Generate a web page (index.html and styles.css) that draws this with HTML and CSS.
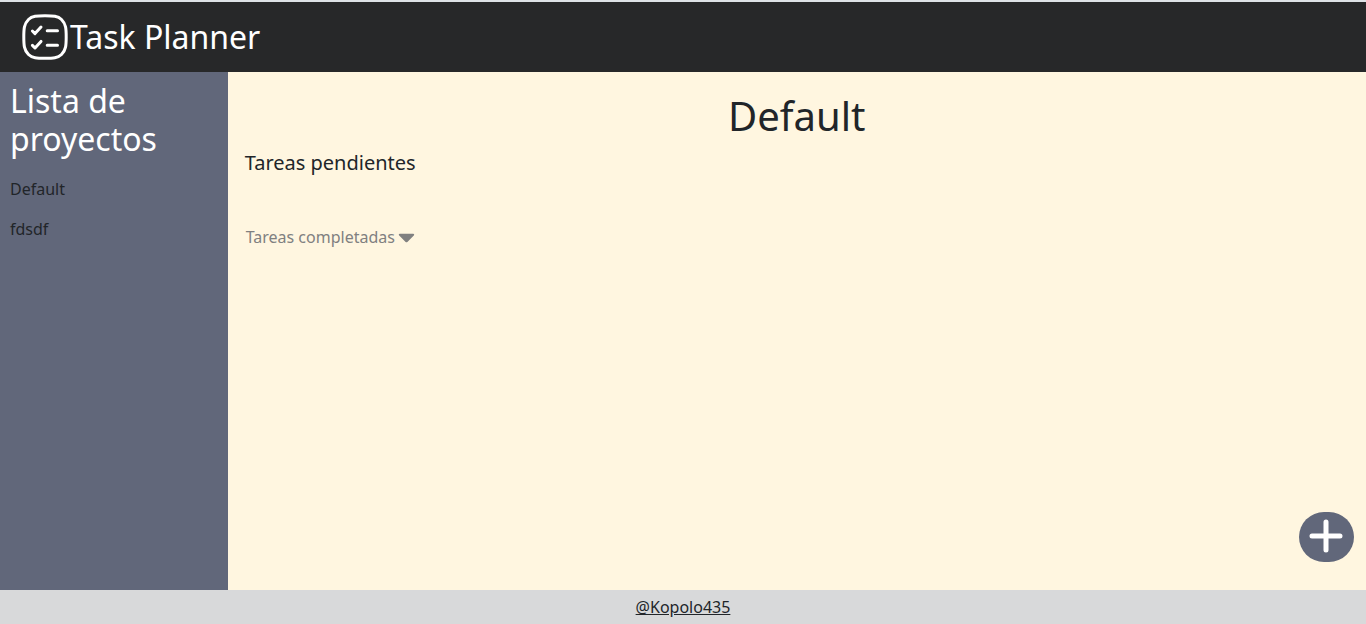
FILE: index.html
```html
<!DOCTYPE html>
<html lang="es">
<head>
<meta charset="utf-8">
<title>Task Planner</title>
<link rel="stylesheet" href="styles.css">
</head>
<body>
<header class="header">
  <svg class="logo" viewBox="0 0 50 50" aria-hidden="true">
    <path d="M25 3.800C33 3.800 38 4 41.500 7.500C46 12 46.200 17 46.200 25S46 38 41.500 42.500C38 46 33 46.200 25 46.200S12 46 8.500 42.500C4 38 3.800 33 3.800 25S4 12 8.500 7.500C12 4 17 3.800 25 3.800z"/>
    <path d="M12.400 19l2.600 2.600 6-6.600M12.400 33.400l2.600 2.600 6-6.600M27.200 18.800h10.300M27.200 33.300h10.300"/>
  </svg>
  <h1 class="brand">Task Planner</h1>
</header>
<div class="content">
  <aside class="sidebar">
    <h2 class="sidebar-title">Lista de proyectos</h2>
    <button class="project" type="button">Default</button>
    <button class="project" type="button">fdsdf</button>
  </aside>
  <main class="main">
    <h2 class="title">Default</h2>
    <h3 class="pending">Tareas pendientes</h3>
    <button class="completed" type="button">Tareas completadas
      <svg class="caret" viewBox="0 0 20 20" aria-hidden="true"><path d="M2.800 6.800h13.400c1 0 1.300 1 .6 1.700l-6.400 6.400c-.6.600-1.200.600-1.800 0L2.200 8.500C1.500 7.800 1.800 6.800 2.800 6.800z"/></svg>
    </button>
    <button class="add" type="button" aria-label="Agregar tarea">
      <svg class="plus" viewBox="0 0 34 34" aria-hidden="true"><path d="M17 3v28M3 17h28"/></svg>
    </button>
  </main>
</div>
<footer class="footer"><a class="author" href="#">@Kopolo435</a></footer>
</body>
</html>
```
FILE: styles.css
```css
* { box-sizing: border-box; }
body {
  margin: 0;
  min-height: 100vh;
  display: flex;
  flex-direction: column;
  font: 16px/24px "Noto Sans", sans-serif;
  color: #212529;
}
h1, h2, h3 { margin: 0; font-weight: 400; }
button { border: 0; padding: 0; background: none; font: inherit; color: inherit; cursor: pointer; }
.header {
  display: flex;
  align-items: center;
  padding: 10px 20px;
  border-top: 2px solid #dee2e6;
  background: #272829;
  color: #fff;
}
.logo { width: 50px; height: 50px; fill: none; stroke: #fff; stroke-width: 3; stroke-linecap: round; stroke-linejoin: round; }
.brand { font-size: 32px; line-height: 38px; }
.content { flex: 1; display: grid; grid-template-columns: 1fr 5fr; }
.sidebar { display: flex; flex-direction: column; align-items: flex-start; padding: 10px; background: #61677a; }
.sidebar-title { margin-bottom: 19px; font-size: 32px; line-height: 38px; color: #fff; }
.project { margin-bottom: 16px; }
.main { position: relative; display: flex; flex-direction: column; align-items: flex-start; padding: 20px 17px; background: #fff6e0; }
.title { align-self: center; margin-bottom: 8px; font-size: 40px; line-height: 48px; }
.pending { font-size: 20px; line-height: 30px; }
.completed { display: flex; align-items: center; gap: 2px; margin-top: 46px; padding: 1px; color: #808080; }
.caret { width: 20px; height: 20px; fill: currentColor; }
.add { position: absolute; right: 12px; bottom: 28px; display: grid; place-items: center; width: 55px; height: 50px; padding: 0 1px 3px 0; border-radius: 25px; background: #61677a; }
.plus { width: 34px; height: 34px; fill: none; stroke: #fff; stroke-width: 5; stroke-linecap: round; }
.footer { padding: 5px; text-align: center; background: #d8d9da; }
.author { color: inherit; }
```
